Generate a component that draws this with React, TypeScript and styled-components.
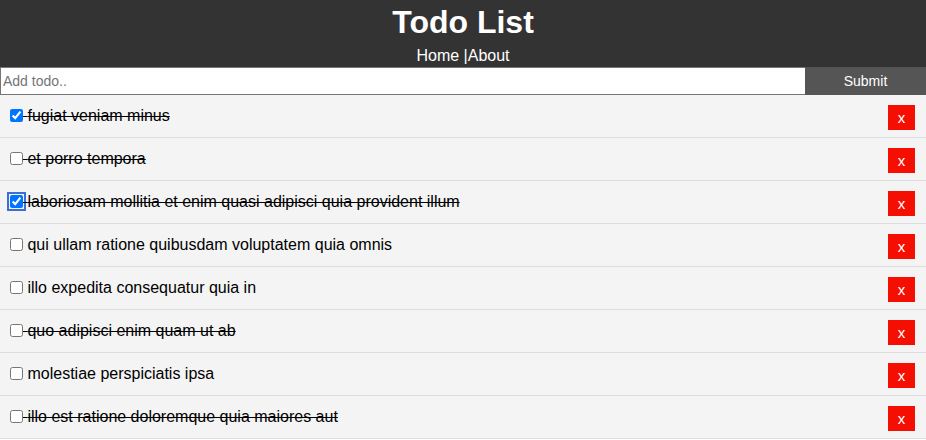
import * as React from "react";
import styled, { createGlobalStyle } from "styled-components";

const GlobalStyle = createGlobalStyle`
  * {
    box-sizing: border-box;
    margin: 0;
    padding: 0;
  }
  body {
    font-family: "Liberation Sans", Arial, Helvetica, sans-serif;
    line-height: 1.4;
    background: #fff;
    color: #000;
  }
`;

const Header = styled.header`
  background: #333;
  color: #fff;
  text-align: center;
`;

const Title = styled.h1`
  font-size: 32px;
  font-weight: bold;
  line-height: 44.8px;
`;

const NavLink = styled.a`
  color: #fff;
  text-decoration: none;
  font-size: 16px;
`;

const Nav = styled.div`
  font-size: 16px;
  line-height: 22px;
`;

const Form = styled.form`
  display: flex;
  height: 28px;
`;

const TodoInput = styled.input`
  flex: 1;
  padding: 0 2px;
  font-family: inherit;
  font-size: 14px;
  border: 1px solid #767676;
  border-right: none;
  outline: none;
  &::placeholder {
    color: #757575;
  }
`;

const SubmitButton = styled.input`
  width: 121px;
  border: none;
  background: #555;
  color: #fff;
  font-family: inherit;
  font-size: 14px;
  cursor: pointer;
`;

const Row = styled.div<{ $done: boolean }>`
  background: #f4f4f4;
  padding: 10px;
  border-bottom: 1px #ddd solid;
  font-size: 16px;
  line-height: 22px;
  text-decoration: ${(p) => (p.$done ? "line-through" : "none")};
`;

const Check = styled.input<{ $focus?: boolean }>`
  width: 13px;
  height: 13px;
  margin: 0;
  vertical-align: -1px;
  outline: ${(p) => (p.$focus ? "2px solid #3b6fd6" : "none")};
  outline-offset: 1px;
  border-radius: 2px;
`;

const DeleteButton = styled.button`
  float: right;
  width: 27px;
  height: 25px;
  background: #f40f02;
  color: #fff;
  border: none;
  margin-right: 1px;
  font-family: inherit;
  font-size: 15px;
  line-height: 25px;
  text-align: center;
  cursor: pointer;
`;

interface Todo {
  id: number;
  title: string;
  checked: boolean;
  done: boolean;
  focus?: boolean;
}

const initialTodos: Todo[] = [
  { id: 1, title: "fugiat veniam minus", checked: true, done: true },
  { id: 2, title: "et porro tempora", checked: false, done: true },
  {
    id: 3,
    title: "laboriosam mollitia et enim quasi adipisci quia provident illum",
    checked: true,
    done: true,
    focus: true,
  },
  { id: 4, title: "qui ullam ratione quibusdam voluptatem quia omnis", checked: false, done: false },
  { id: 5, title: "illo expedita consequatur quia in", checked: false, done: false },
  { id: 6, title: "quo adipisci enim quam ut ab", checked: false, done: true },
  { id: 7, title: "molestiae perspiciatis ipsa", checked: false, done: false },
  { id: 8, title: "illo est ratione doloremque quia maiores aut", checked: false, done: true },
];

export default function App() {
  const [todos, setTodos] = React.useState<Todo[]>(initialTodos);

  const toggle = (id: number) =>
    setTodos(todos.map((t) => (t.id === id ? { ...t, checked: !t.checked, done: !t.done } : t)));

  const remove = (id: number) => setTodos(todos.filter((t) => t.id !== id));

  return (
    <>
      <GlobalStyle />
      <Header>
        <Title>Todo List</Title>
        <Nav>
          <NavLink href="#">Home</NavLink> |<NavLink href="#">About</NavLink>
        </Nav>
      </Header>
      <Form onSubmit={(e) => e.preventDefault()}>
        <TodoInput type="text" name="title" placeholder="Add todo.." />
        <SubmitButton type="submit" value="Submit" />
      </Form>
      {todos.map((todo) => (
        <Row key={todo.id} $done={todo.done}>
          <Check
            type="checkbox"
            checked={todo.checked}
            $focus={todo.focus}
            onChange={() => toggle(todo.id)}
          />{" "}
          {todo.title}
          <DeleteButton onClick={() => remove(todo.id)}>x</DeleteButton>
        </Row>
      ))}
    </>
  );
}
